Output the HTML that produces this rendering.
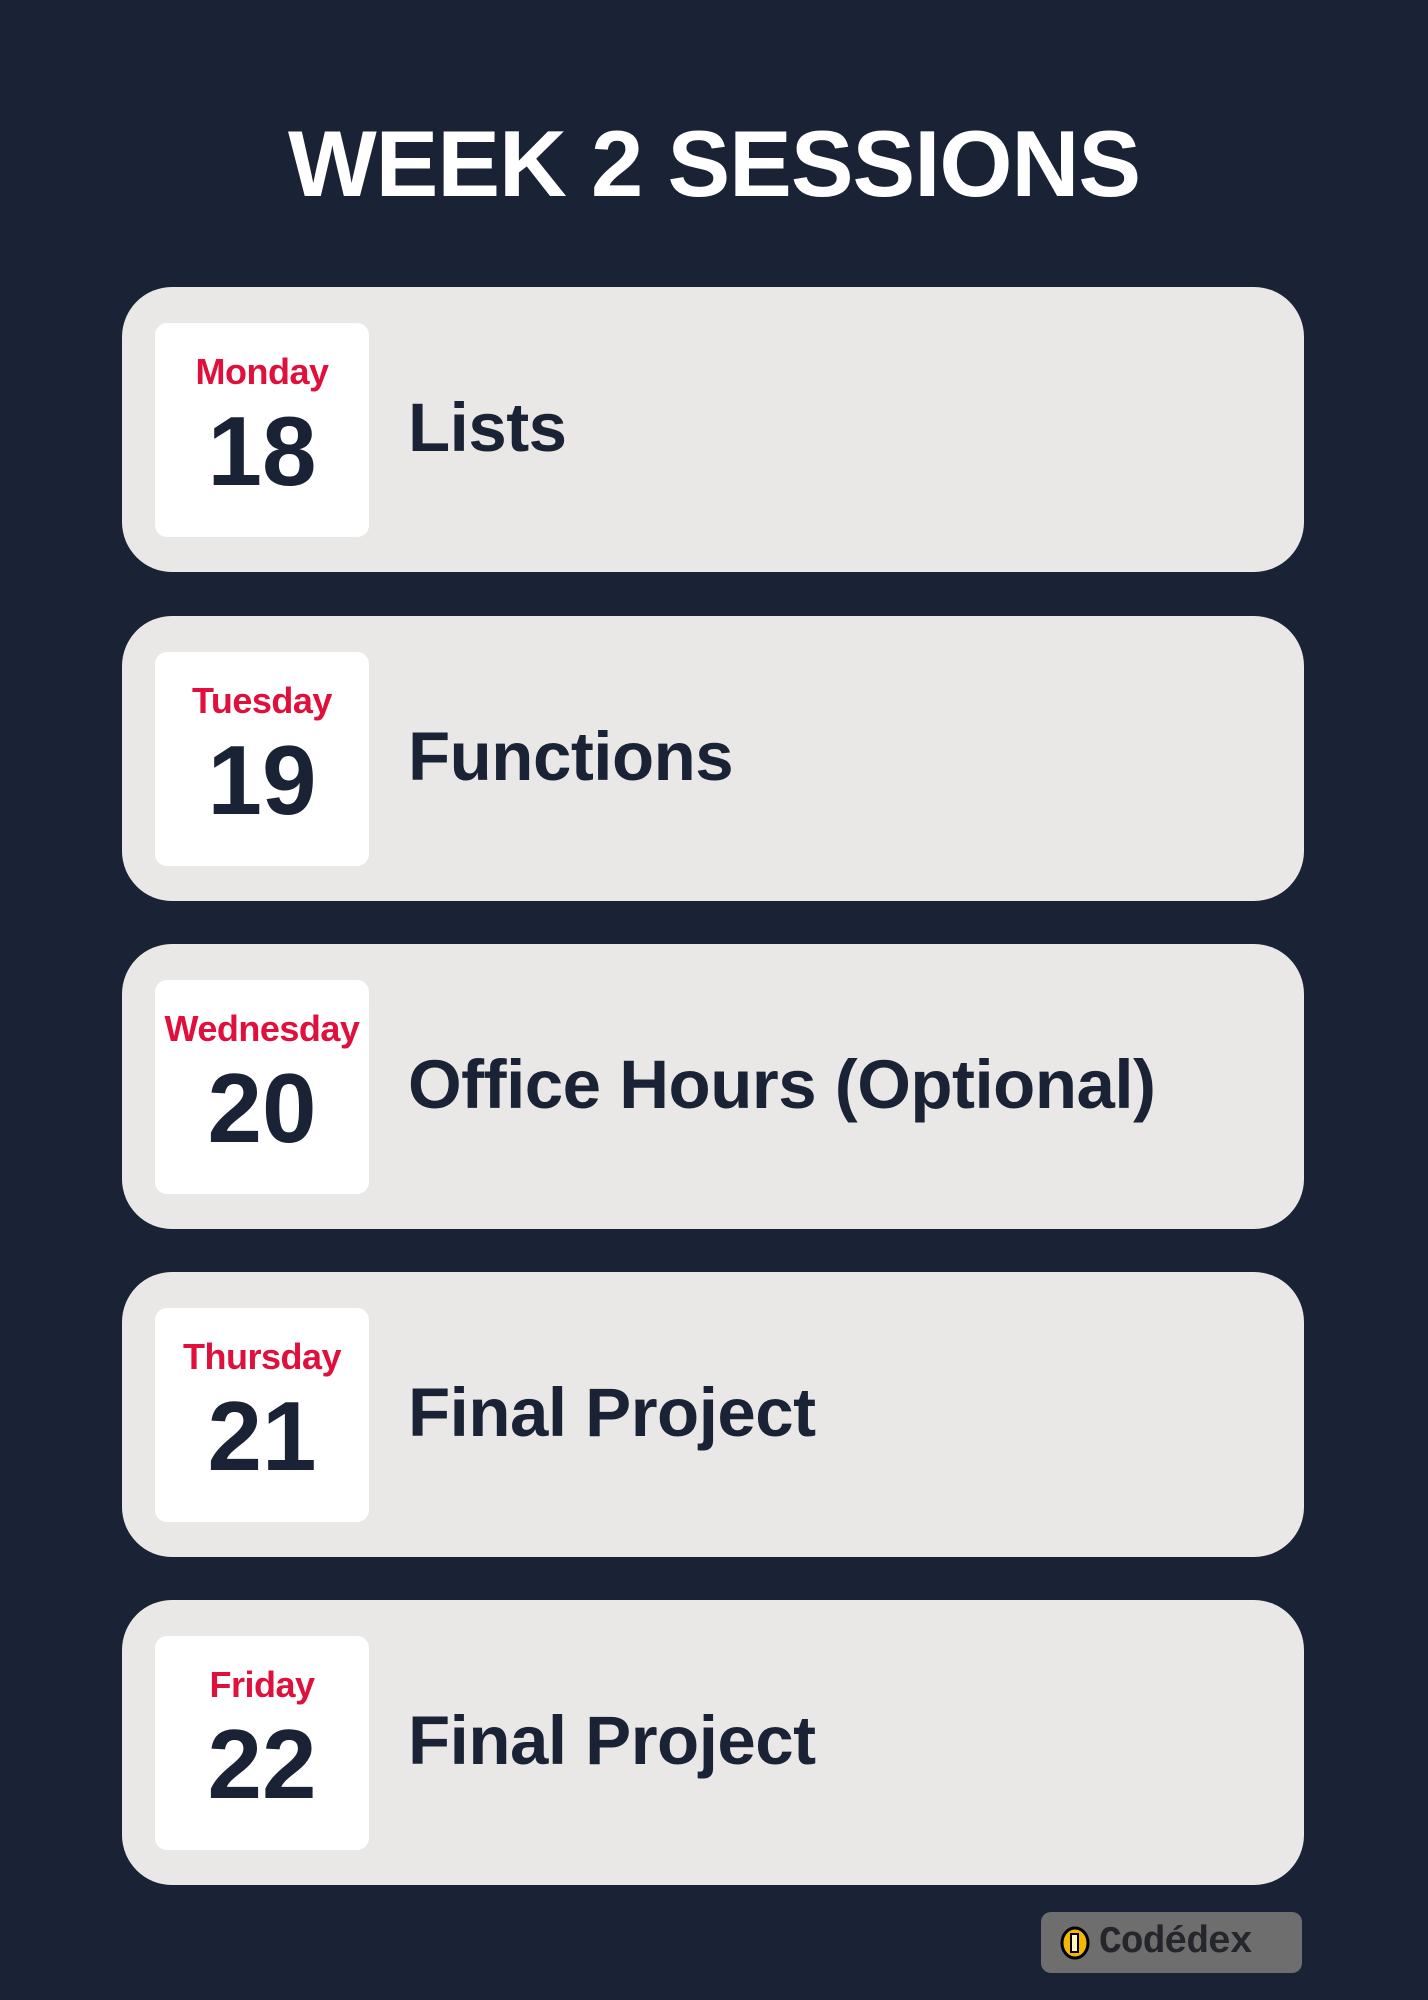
<!DOCTYPE html>
<html><head><style>
body{margin:0;width:1428px;height:2000px;background:#1a2335;font-family:"Liberation Sans",sans-serif;position:relative;overflow:hidden}
h1{position:absolute;top:114px;left:0;width:1428px;text-align:center;margin:0;color:#fff;font-size:94px;font-weight:bold;line-height:100px;letter-spacing:-1px}
.card{position:absolute;left:122px;width:1182px;height:285px;background:#e9e8e7;border-radius:50px}
.date{position:absolute;left:33px;top:36px;width:214px;height:214px;background:#fff;border-radius:12px;text-align:center}
.day{position:absolute;top:28px;width:100%;color:#e0103d;font-size:36px;font-weight:bold;letter-spacing:-0.5px}
.num{position:absolute;top:78px;width:100%;color:#1a2335;font-size:98px;font-weight:bold;line-height:100px}
.t{position:absolute;left:286px;top:-2px;line-height:285px;color:#1a2335;font-size:69px;font-weight:bold;letter-spacing:-0.5px}
.badge{position:absolute;left:1041px;top:1912px;width:261px;height:61px;background:#6e6e6e;border-radius:10px}
.badge span{position:absolute;left:58px;top:9px;font-family:"Liberation Mono",monospace;font-weight:bold;font-size:38px;line-height:44px;color:#24262c;letter-spacing:-1px}
</style></head><body>
<h1>WEEK 2 SESSIONS</h1>
<div class="card" style="top:287px"><div class="date"><div class="day">Monday</div><div class="num">18</div></div><div class="t">Lists</div></div>
<div class="card" style="top:616px"><div class="date"><div class="day">Tuesday</div><div class="num">19</div></div><div class="t">Functions</div></div>
<div class="card" style="top:944px"><div class="date"><div class="day">Wednesday</div><div class="num">20</div></div><div class="t">Office Hours (Optional)</div></div>
<div class="card" style="top:1272px"><div class="date"><div class="day">Thursday</div><div class="num">21</div></div><div class="t">Final Project</div></div>
<div class="card" style="top:1600px"><div class="date"><div class="day">Friday</div><div class="num">22</div></div><div class="t">Final Project</div></div>
<div class="badge"><svg style="position:absolute;left:19px;top:14px" width="30" height="34" viewBox="0 0 30 34"><ellipse cx="15" cy="17" rx="13" ry="15" fill="#f5b800" stroke="#000" stroke-width="3"/><rect x="11" y="8" width="7" height="18" fill="#fff8c0" stroke="#000" stroke-width="2"/></svg><span>Codédex</span></div>
</body></html>
